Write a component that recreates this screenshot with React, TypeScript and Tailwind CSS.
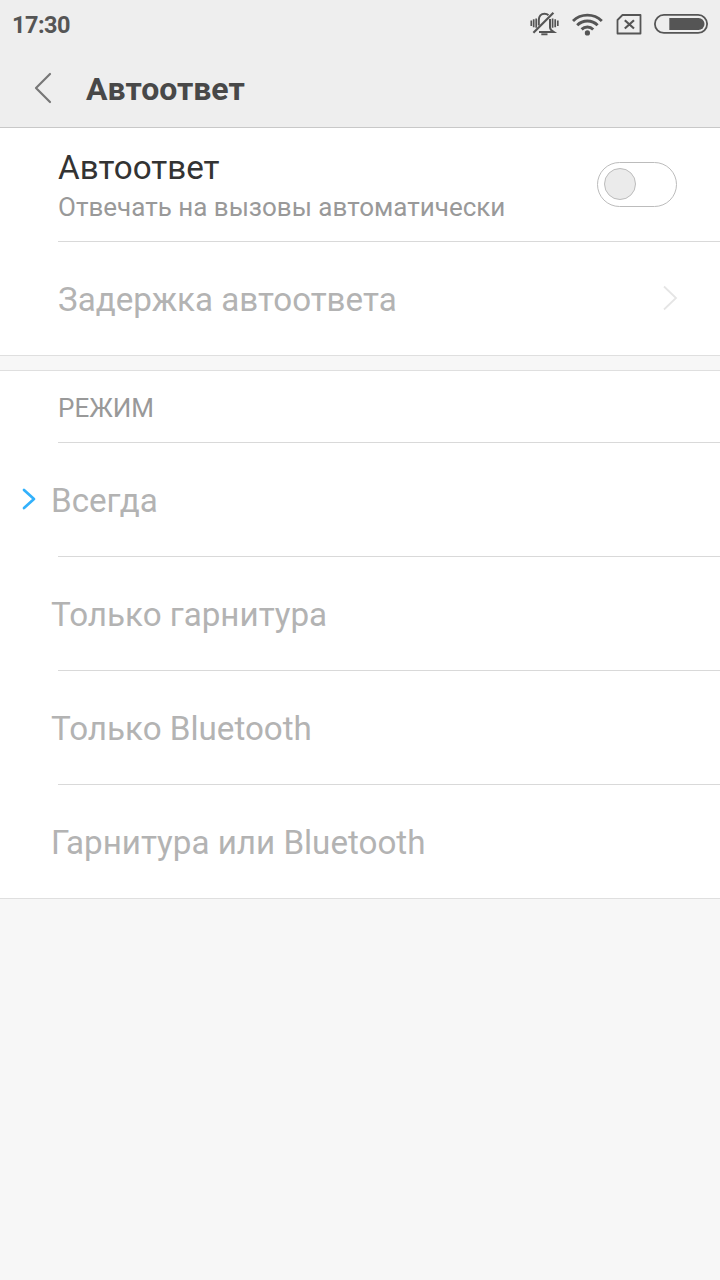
import React from "react";

function SilentIcon() {
  return (
    <svg width="30" height="28" viewBox="530 10 30 28" fill="none" stroke="#555555">
      <path d="M531.300 20.500v5.500M533.700 19.300v8M536.200 18.500v9.300M552.600 18.500v9.300M555.200 19.300v8M557.800 20.500v5.500" strokeWidth="1.700" />
      <path d="M538.800 25.500V20c0-4 2.300-6.300 5.700-6.300 1.700 0 3 .5 4 1.500M550 19v8.500c0 1.500 1 2.800 3.600 4.400H539" strokeWidth="2" />
      <path d="M533.400 32.800L553.400 12.800" strokeWidth="2.200" />
      <path d="M541.300 34.300h6.200" strokeWidth="1.900" />
    </svg>
  );
}

function WifiIcon() {
  return (
    <svg width="32" height="24" viewBox="572 11 32 24" fill="none" stroke="#555555" strokeWidth="2.900">
      <path d="M573 20a20.500 20.500 0 0 1 28.800 0M577.200 24.300a14.400 14.400 0 0 1 20.400 0M581.600 28.400a8.200 8.200 0 0 1 11.600 0" />
      <circle cx="587.400" cy="31.900" r="2.600" fill="#555555" stroke="none" />
    </svg>
  );
}

function NoSimIcon() {
  return (
    <svg width="26" height="22" viewBox="616 13 26 22" fill="none" stroke="#555555">
      <path d="M622.500 15H640.500V33.500H617.500V20z" strokeWidth="1.8" strokeLinejoin="round" />
      <path d="M624.800 20.300L634 28.500M634 20.300L624.800 28.500" strokeWidth="2.200" />
    </svg>
  );
}

function BatteryIcon() {
  return (
    <svg width="54" height="20" viewBox="654 14 54 20" fill="none">
      <rect x="654.900" y="14.900" width="52.200" height="18" rx="9" stroke="#555555" strokeWidth="1.8" />
      <path d="M669.300 18H698.500a6 6 0 0 1 0 12H669.300z" fill="#555555" />
    </svg>
  );
}

function Option({ label, selected = false, last = false }: { label: string; selected?: boolean; last?: boolean }) {
  return (
    <li className="flex h-[114px] flex-col">
      <div className="flex flex-1 items-center">
        <span className="flex w-[51px] shrink-0 pl-[22px]">
          {selected && (
            <svg className="-mt-0.5" width="14" height="22" viewBox="0 0 14 22" fill="none">
              <path d="M2 2L12 11L2 20" stroke="#33b1fb" strokeWidth="2.700" strokeLinecap="round" strokeLinejoin="round" />
            </svg>
          )}
        </span>
        <span className="pt-0.5 text-[33.18px] leading-10 text-[#b3b3b3]">{label}</span>
      </div>
      <div className={last ? "h-px bg-[#dfdfdf]" : "ml-[58px] h-px bg-[#d9d9d9]"} />
    </li>
  );
}

export default function App() {
  return (
    <div className="flex h-[1280px] w-[720px] flex-col overflow-hidden bg-[#f7f7f7] font-['Roboto','Noto_Sans',sans-serif]">
      <header className="flex h-32 flex-col border-b border-[#c8c8c8] bg-[#eeeeee]">
        <div className="flex h-[50px] items-center justify-between pl-3 pr-3">
          <span className="text-[23.500px] font-bold leading-7 tracking-[-0.5px] text-[#555555]">17:30</span>
          <div className="flex items-center pb-0.5">
            <SilentIcon />
            <span className="ml-3 flex"><WifiIcon /></span>
            <span className="ml-3 flex"><NoSimIcon /></span>
            <span className="ml-3 flex"><BatteryIcon /></span>
          </div>
        </div>
        <div className="flex h-[77px] items-center pl-[34px]">
          <svg className="-mt-0.5" width="18" height="32" viewBox="0 0 18 32" fill="none">
            <path d="M16 2L2 16L16 30" stroke="#777777" strokeWidth="2.200" strokeLinecap="round" strokeLinejoin="round" />
          </svg>
          <h1 className="ml-[34px] text-[32px] font-bold leading-10 text-[#484848]">Автоответ</h1>
        </div>
      </header>

      <section className="flex flex-col bg-white">
        <div className="flex h-[113px] items-center justify-between pl-[58px] pr-[43px]">
          <div className="flex flex-col pt-1">
            <span className="text-[33.2px] leading-10 text-[#333333]">Автоответ</span>
            <span className="text-[26px] leading-[38px] text-[#999999]">Отвечать на вызовы автоматически</span>
          </div>
          <button className="flex h-[45px] w-20 items-center rounded-full border border-[#bcbcbc] pb-px pl-1.5">
            <span className="h-8 w-8 rounded-full border border-[#bcbcbc] bg-[#ebebeb]" />
          </button>
        </div>
        <div className="ml-[58px] h-px bg-[#d9d9d9]" />
        <div className="flex h-[113px] items-center justify-between pl-[58px] pr-[42px]">
          <span className="pt-0.5 text-[33.15px] leading-10 text-[#b3b3b3]">Задержка автоответа</span>
          <svg className="-mt-0.5" width="16" height="26" viewBox="0 0 16 26" fill="none">
            <path d="M2 1.500L14 13L2 24.500" stroke="#e5e5e5" strokeWidth="1.800" />
          </svg>
        </div>
        <div className="h-px bg-[#dfdfdf]" />
      </section>

      <section className="mt-3.5 border-t border-[#dfdfdf] bg-white">
        <h2 className="flex h-[71px] items-center pl-[58px] pt-1 text-[26px] text-[#999999]">РЕЖИМ</h2>
        <div className="ml-[58px] h-px bg-[#d9d9d9]" />
        <ul>
          <Option label="Всегда" selected />
          <Option label="Только гарнитура" />
          <Option label="Только Bluetooth" />
          <Option label="Гарнитура или Bluetooth" last />
        </ul>
      </section>
    </div>
  );
}
